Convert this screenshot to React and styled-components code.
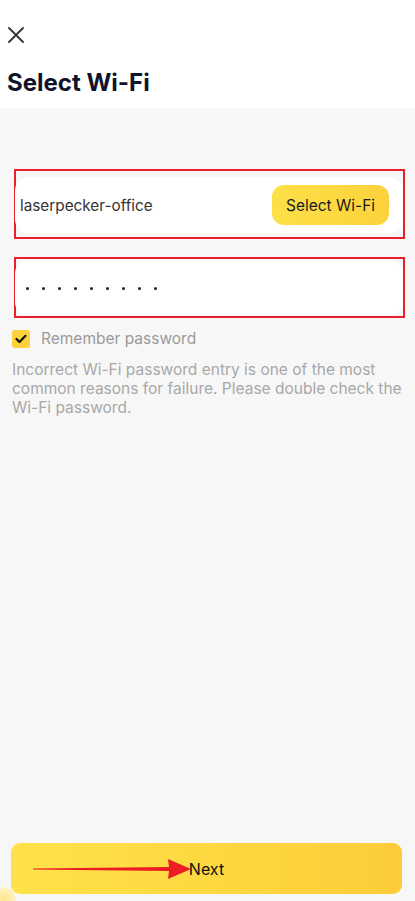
import React from "react";
import styled, { createGlobalStyle } from "styled-components";

const GlobalStyle = createGlobalStyle`
  html, body {
    margin: 0;
    padding: 0;
    background: #f7f7f7;
    font-family: "Inter", "Noto Sans", sans-serif;
  }
  * { box-sizing: border-box; }
`;

const Page = styled.div`
  position: relative;
  min-height: 100vh;
  display: flex;
  flex-direction: column;
  overflow: hidden;
`;

const Header = styled.header`
  background: #ffffff;
  height: 108px;
  padding: 27px 0 0 8px;
`;

const CloseButton = styled.button`
  display: block;
  width: 16px;
  height: 16px;
  padding: 0;
  border: none;
  background: none;
  cursor: pointer;
`;

const Title = styled.h1`
  margin: 25px 0 0 -1px;
  font-size: 24px;
  font-weight: 700;
  line-height: 30px;
  color: #10142a;
`;

const Content = styled.main`
  flex: 1;
  padding: 61px 10px 0 12px;
  display: flex;
  flex-direction: column;
`;

const Highlight = styled.div`
  margin-left: 2px;
  margin-top: ${({ $top }) => $top || 0}px;
  border: 2px solid #e8202a;
  padding: ${({ $pad }) => $pad};
`;

const Card = styled.div`
  height: 56px;
  margin-left: -1px;
  background: #ffffff;
  border-radius: 14px;
  display: flex;
  align-items: center;
  justify-content: space-between;
  padding: ${({ $pad }) => $pad};
`;

const NetworkName = styled.span`
  font-size: 15.3px;
  color: #333333;
`;

const SelectButton = styled.button`
  height: 40px;
  width: 117px;
  border: none;
  border-radius: 12px;
  background: linear-gradient(90deg, #fde047 0%, #fcd23c 100%);
  font-family: inherit;
  font-size: 15.5px;
  color: #1a1a1a;
  cursor: pointer;
`;

const Dots = styled.div`
  display: flex;
  gap: 13px;
`;

const Dot = styled.span`
  width: 3px;
  height: 3px;
  border-radius: 50%;
  background: #1f2333;
`;

const CheckRow = styled.label`
  margin-top: 11px;
  display: flex;
  align-items: center;
  gap: 11px;
  font-size: 15.5px;
  color: #9a9a9a;
`;

const CheckBox = styled.span`
  width: 18px;
  height: 18px;
  border-radius: 3px;
  background: #fcd13c;
  display: flex;
  align-items: center;
  justify-content: center;
`;

const Hint = styled.p`
  margin: 12px 0 0;
  font-size: 15.5px;
  line-height: 19px;
  color: #a8a8a8;
`;

const Footer = styled.div`
  padding: 0 13px 7px 11px;
`;

const NextButton = styled.button`
  position: relative;
  width: 100%;
  height: 51px;
  border: none;
  border-radius: 9px;
  background: linear-gradient(90deg, #fee24b 0%, #fdd63f 60%, #fccc3a 100%);
  font-family: inherit;
  font-size: 16px;
  color: #111111;
  cursor: pointer;
`;

const Arrow = styled.svg`
  position: absolute;
  left: 22px;
  top: 15px;
`;

const Blob = styled.span`
  position: absolute;
  left: -8px;
  bottom: -10px;
  width: 24px;
  height: 24px;
  border-radius: 50%;
  background: radial-gradient(circle, #fde68a 0%, #fef3c7 70%, rgba(254, 243, 199, 0) 100%);
`;

export default function App() {
  return (
    <>
      <GlobalStyle />
      <Page>
        <Header>
          <CloseButton aria-label="close">
            <svg width="16" height="16" viewBox="0 0 16 16">
              <path d="M1 1L15 15M15 1L1 15" stroke="#333" strokeWidth="1.8" strokeLinecap="round" />
            </svg>
          </CloseButton>
          <Title>Select Wi-Fi</Title>
        </Header>
        <Content>
          <Highlight $pad="6px 0 4px 0">
            <Card $pad="0 14px 0 5px">
              <NetworkName>laserpecker-office</NetworkName>
              <SelectButton>Select Wi-Fi</SelectButton>
            </Card>
          </Highlight>
          <Highlight $pad="1px 0 0 0" $top={18}>
            <Card $pad="0 0 0 11px">
              <Dots>
                {Array.from({ length: 9 }).map((_, i) => (
                  <Dot key={i} />
                ))}
              </Dots>
            </Card>
          </Highlight>
          <CheckRow>
            <CheckBox>
              <svg width="12" height="10" viewBox="0 0 12 10">
                <path d="M1.5 5L4.5 8L10.5 1.8" stroke="#111" strokeWidth="2.2" fill="none" strokeLinecap="round" strokeLinejoin="round" />
              </svg>
            </CheckBox>
            Remember password
          </CheckRow>
          <Hint>
            Incorrect Wi-Fi password entry is one of the most common reasons for failure. Please double check the Wi-Fi password.
          </Hint>
        </Content>
        <Footer>
          <NextButton>
            <Arrow width="160" height="22" viewBox="0 0 160 22">
              <polygon points="0,10.6 136,9 135,1 158,11 135,21 136,13 0,11.4" fill="#ec1c24" />
            </Arrow>
            Next
          </NextButton>
        </Footer>
        <Blob />
      </Page>
    </>
  );
}
